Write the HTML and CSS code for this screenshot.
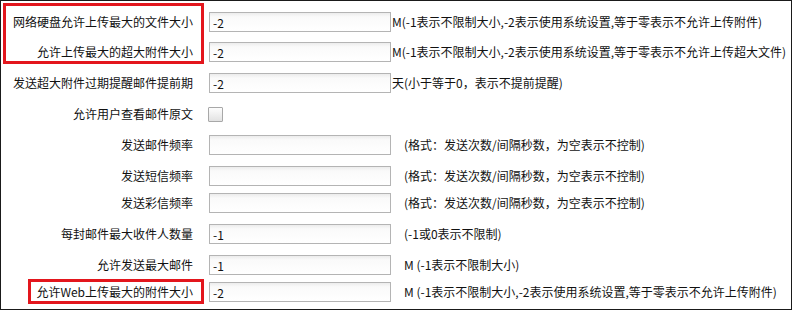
FILE: index.html
```html
<!DOCTYPE html>
<html lang="zh-CN">

<head>
    <meta charset="UTF-8" />
    <meta name="viewport" content="width=device-width, initial-scale=1.0" />
    <title>邮件参数设置</title>
    <link rel="stylesheet" href="styles.css">
</head>

<body>
    <!-- 参数表单 -->
    <div class="settings">
        <div class="row">
            <label class="label">网络硬盘允许上传最大的文件大小</label>
            <input type="text" class="field" value="-2" />
            <span class="hint">M(-1表示不限制大小,-2表示使用系统设置,等于零表示不允许上传附件)</span>
        </div>
        <div class="row first-gap">
            <label class="label">允许上传最大的超大附件大小</label>
            <input type="text" class="field" value="-2" />
            <span class="hint">M(-1表示不限制大小,-2表示使用系统设置,等于零表示不允许上传超大文件)</span>
        </div>
        <div class="row">
            <label class="label">发送超大附件过期提醒邮件提前期</label>
            <input type="text" class="field" value="-2" />
            <span class="hint">天(小于等于0，表示不提前提醒)</span>
        </div>
        <div class="row">
            <label class="label">允许用户查看邮件原文</label>
            <input type="checkbox" class="check" />
        </div>
        <div class="row">
            <label class="label">发送邮件频率</label>
            <input type="text" class="field" value="" />
            <span class="hint spaced">(格式：发送次数/间隔秒数，为空表示不控制)</span>
        </div>
        <div class="row">
            <label class="label">发送短信频率</label>
            <input type="text" class="field" value="" />
            <span class="hint spaced">(格式：发送次数/间隔秒数，为空表示不控制)</span>
        </div>
        <div class="row tight">
            <label class="label">发送彩信频率</label>
            <input type="text" class="field" value="" />
            <span class="hint spaced">(格式：发送次数/间隔秒数，为空表示不控制)</span>
        </div>
        <div class="row">
            <label class="label">每封邮件最大收件人数量</label>
            <input type="text" class="field" value="-1" />
            <span class="hint spaced">(-1或0表示不限制)</span>
        </div>
        <div class="row">
            <label class="label">允许发送最大邮件</label>
            <input type="text" class="field" value="-1" />
            <span class="hint spaced">M (-1表示不限制大小)</span>
        </div>
        <div class="row tight">
            <label class="label">允许Web上传最大的附件大小</label>
            <input type="text" class="field" value="-2" />
            <span class="hint spaced">M (-1表示不限制大小,-2表示使用系统设置,等于零表示不允许上传附件)</span>
        </div>

        <!-- 标注框 -->
        <div class="mark mark-top"></div>
        <div class="mark mark-bottom"></div>
    </div>
</body>

</html>
```

FILE: styles.css
```css
* {
    box-sizing: border-box;
}

body {
    margin: 0;
    padding: 0;
    background: #ffffff;
    font-family: "Noto Sans CJK SC", "DejaVu Sans", sans-serif;
    font-size: 12px;
    color: #111;
}

.settings {
    position: relative;
    width: 792px;
    height: 310px;
    border: 1px solid #1a1a1a;
    padding: 11px 0 7px 0;
    display: flex;
    flex-direction: column;
}

.row {
    display: flex;
    align-items: center;
    height: 20px;
    margin-top: 11px;
}

.row:first-child {
    margin-top: 0;
}

.row.first-gap {
    margin-top: 10px;
}

.row.tight {
    margin-top: 7px;
}

.label {
    width: 192px;
    text-align: right;
    white-space: nowrap;
    line-height: 20px;
    margin-right: 16px;
}

.field {
    width: 182px;
    height: 20px;
    margin: 0;
    padding: 0 3px;
    font-family: "Noto Sans CJK SC", "DejaVu Sans", sans-serif;
    font-size: 12px;
    color: #111;
    border: 1px solid #b4b4b4;
    border-radius: 0;
    outline: none;
    background: linear-gradient(to bottom, #ececec 0, #fafafa 4px, #ffffff 100%);
}

.check {
    appearance: none;
    -webkit-appearance: none;
    width: 15px;
    height: 15px;
    margin: 0 0 0 -1px;
    border: 1px solid #a8a8a8;
    border-radius: 1px;
    background: linear-gradient(to bottom, #fdfdfd, #e2e2e2);
}

.hint {
    white-space: nowrap;
    line-height: 20px;
    padding-left: 1px;
}

.hint.spaced {
    padding-left: 13px;
}

.mark {
    position: absolute;
    border: 3px solid #e3161d;
}

.mark-top {
    left: 2px;
    top: 2px;
    width: 201px;
    height: 61px;
}

.mark-bottom {
    left: 27px;
    top: 278px;
    width: 176px;
    height: 25px;
}
```
